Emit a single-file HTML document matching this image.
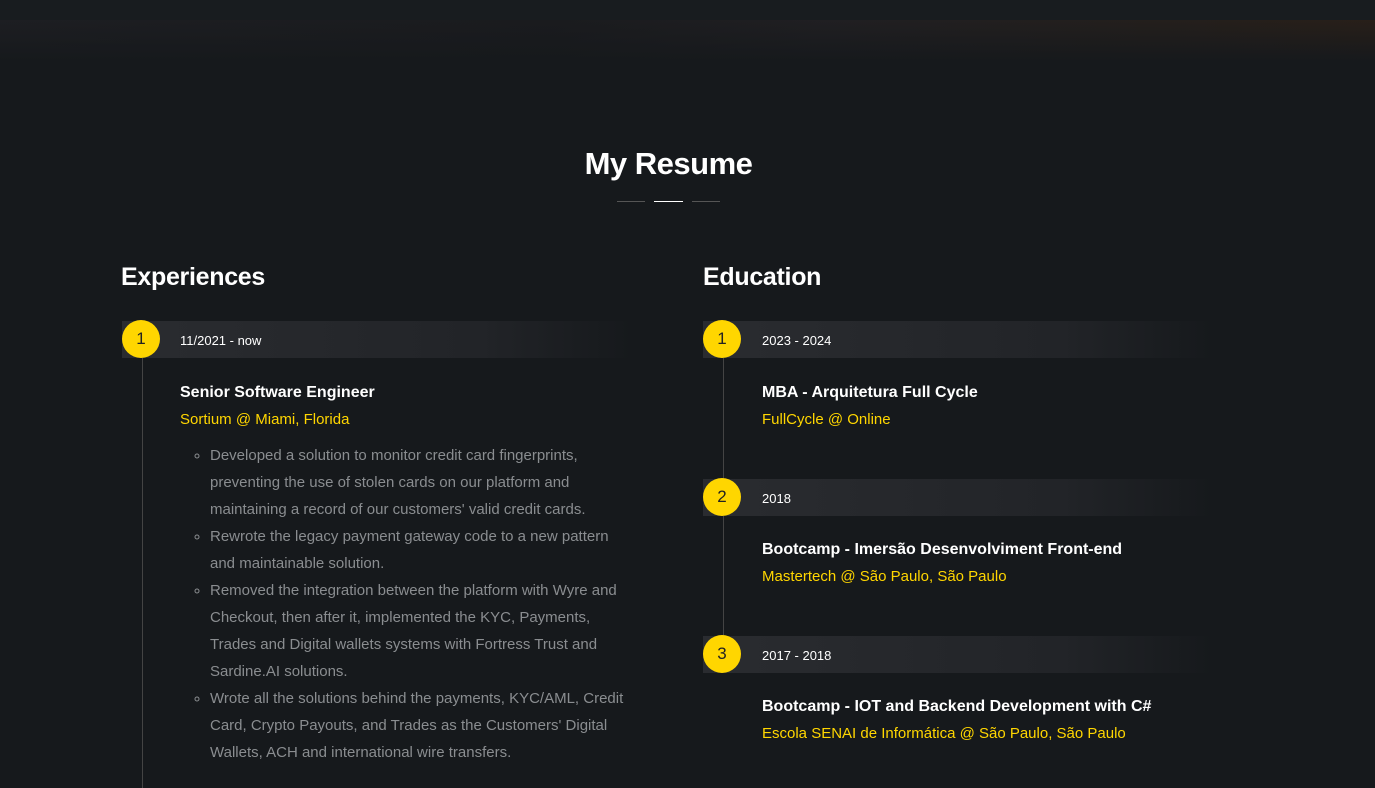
<!DOCTYPE html>
<html><head><meta charset="utf-8"><style>
*{margin:0;padding:0;box-sizing:border-box}
body{width:1375px;height:786px;overflow:hidden;background:#16191c;font-family:"Liberation Sans",sans-serif;position:relative}
.top{position:absolute;left:0;top:0;width:1375px;height:20px;background:#181c1f}
.band{position:absolute;left:0;top:20px;width:1375px;height:42px;background:linear-gradient(90deg,#1d1e22 0%,#1a1b1e 40%,#201f22 60%,#241f1c 85%,#281f19 100%)}
.band:after{content:"";position:absolute;inset:0;background:linear-gradient(180deg,rgba(22,25,28,0) 0%,#16191c 100%)}
h1{position:absolute;top:146px;left:0;width:1337px;text-align:center;color:#fff;font-size:31px;font-weight:bold;letter-spacing:-0.5px}
.dl{position:absolute;top:201px;height:1px;background:#555}
h2{position:absolute;color:#fff;font-size:25px;font-weight:bold;letter-spacing:-0.3px}
.bar{position:absolute;height:37px;width:510px;background:linear-gradient(90deg,#2a2c30 0%,#222428 70%,rgba(22,25,28,0) 100%)}
.c{position:absolute;width:38px;height:38px;border-radius:50%;background:#ffd600;color:#222;font-size:17px;text-align:center;line-height:38px}
.d{position:absolute;color:#fff;font-size:13px}
.vl{position:absolute;width:1px;background:#444}
.t{position:absolute;color:#fff;font-size:16px;font-weight:bold}
.s{position:absolute;color:#ffd600;font-size:15px}
ul{position:absolute;left:210px;top:442px;width:420px;color:#8a8d90;font-size:15px;line-height:27px;list-style:circle}
</style></head><body>
<div class="top"></div><div class="band"></div>
<h1>My Resume</h1>
<div class="dl" style="left:617px;width:28px"></div>
<div class="dl" style="left:654px;width:29px;background:#fff"></div>
<div class="dl" style="left:692px;width:28px"></div>
<h2 style="left:121px;top:263px">Experiences</h2>
<h2 style="left:703px;top:263px">Education</h2>

<div class="vl" style="left:142px;top:358px;height:430px"></div>
<div class="bar" style="left:122px;top:321px"></div>
<div class="c" style="left:122px;top:320px">1</div>
<div class="d" style="left:180px;top:333px">11/2021 - now</div>
<div class="t" style="left:180px;top:384px">Senior Software Engineer</div>
<div class="s" style="left:180px;top:411px">Sortium @ Miami, Florida</div>
<ul>
<li>Developed a solution to monitor credit card fingerprints, preventing the use of stolen cards on our platform and maintaining a record of our customers' valid credit cards.</li>
<li>Rewrote the legacy payment gateway code to a new pattern and maintainable solution.</li>
<li>Removed the integration between the platform with Wyre and Checkout, then after it, implemented the KYC, Payments, Trades and Digital wallets systems with Fortress Trust and Sardine.AI solutions.</li>
<li>Wrote all the solutions behind the payments, KYC/AML, Credit Card, Crypto Payouts, and Trades as the Customers' Digital Wallets, ACH and international wire transfers.</li>
</ul>

<div class="vl" style="left:723px;top:358px;height:300px"></div>
<div class="bar" style="left:703px;top:321px"></div>
<div class="c" style="left:703px;top:320px">1</div>
<div class="d" style="left:762px;top:333px">2023 - 2024</div>
<div class="t" style="left:762px;top:384px">MBA - Arquitetura Full Cycle</div>
<div class="s" style="left:762px;top:411px">FullCycle @ Online</div>

<div class="bar" style="left:703px;top:479px"></div>
<div class="c" style="left:703px;top:478px">2</div>
<div class="d" style="left:762px;top:491px">2018</div>
<div class="t" style="left:762px;top:541px">Bootcamp - Imersão Desenvolviment Front-end</div>
<div class="s" style="left:762px;top:568px">Mastertech @ São Paulo, São Paulo</div>

<div class="bar" style="left:703px;top:636px"></div>
<div class="c" style="left:703px;top:635px">3</div>
<div class="d" style="left:762px;top:648px">2017 - 2018</div>
<div class="t" style="left:762px;top:698px">Bootcamp - IOT and Backend Development with C#</div>
<div class="s" style="left:762px;top:725px">Escola SENAI de Informática @ São Paulo, São Paulo</div>
</body></html>
